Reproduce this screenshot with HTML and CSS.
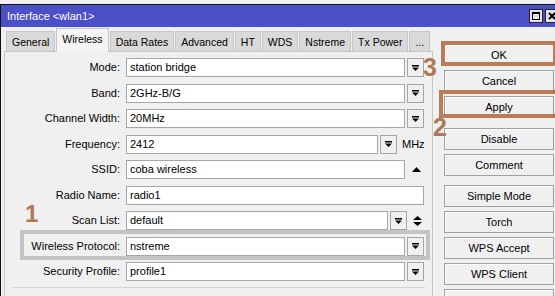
FILE: index.html
```html
<!DOCTYPE html>
<html lang="en">
<head>
  <meta charset="UTF-8">
  <title>Interface wlan1</title>
  <link rel="stylesheet" href="styles.css">
</head>
<body>
  <div class="window">
    <div class="frame">
      <div class="titlebar">
        <span>Interface &lt;wlan1&gt;</span>
        <div class="winbtns">
          <div class="winbtn"><svg width="8" height="8" viewBox="0 0 8 8"><path d="M0 0h8v8H0z M1 2v5h6V2z" fill="#000" fill-rule="evenodd"/></svg></div>
          <div class="winbtn"><svg width="8" height="8" viewBox="0 0 8 8"><path d="M1 1L7 7M7 1L1 7" stroke="#000" stroke-width="2"/></svg></div>
        </div>
      </div>

      <div class="content">
        <div class="main">
          <div class="tabs">
            <div class="tab">General</div>
            <div class="tab active">Wireless</div>
            <div class="tab">Data Rates</div>
            <div class="tab">Advanced</div>
            <div class="tab">HT</div>
            <div class="tab">WDS</div>
            <div class="tab">Nstreme</div>
            <div class="tab">Tx Power</div>
            <div class="tab">...</div>
          </div>

          <div class="panel">
            <div class="form">
              <label>Mode:</label>
              <div class="field"><div class="input">station bridge</div><div class="drop"><svg width="7" height="6" viewBox="0 0 7 6"><rect width="7" height="1.5"/><path d="M0 2.5h7L3.5 6z"/></svg></div></div>

              <label>Band:</label>
              <div class="field"><div class="input">2GHz-B/G</div><div class="drop"><svg width="7" height="6" viewBox="0 0 7 6"><rect width="7" height="1.5"/><path d="M0 2.5h7L3.5 6z"/></svg></div></div>

              <label>Channel Width:</label>
              <div class="field"><div class="input">20MHz</div><div class="drop"><svg width="7" height="6" viewBox="0 0 7 6"><rect width="7" height="1.5"/><path d="M0 2.5h7L3.5 6z"/></svg></div></div>

              <label>Frequency:</label>
              <div class="field"><div class="input">2412</div><div class="drop"><svg width="7" height="6" viewBox="0 0 7 6"><rect width="7" height="1.5"/><path d="M0 2.5h7L3.5 6z"/></svg></div><span class="unit">MHz</span></div>

              <label>SSID:</label>
              <div class="field"><div class="input">coba wireless</div><span class="extra"><svg width="9" height="5" viewBox="0 0 9 5"><path d="M0 5h9L4.5 0z"/></svg></span></div>

              <label>Radio Name:</label>
              <div class="field"><div class="input">radio1</div></div>

              <label>Scan List:</label>
              <div class="field"><div class="input">default</div><div class="drop"><svg width="7" height="6" viewBox="0 0 7 6"><rect width="7" height="1.5"/><path d="M0 2.5h7L3.5 6z"/></svg></div><span class="extra narrow"><svg width="9" height="10" viewBox="0 0 9 10"><path d="M0 4h9L4.5 0z M0 6h9L4.5 10z"/></svg></span></div>

              <label>Wireless Protocol:</label>
              <div class="field"><div class="input">nstreme</div><div class="drop"><svg width="7" height="6" viewBox="0 0 7 6"><rect width="7" height="1.5"/><path d="M0 2.5h7L3.5 6z"/></svg></div></div>

              <label>Security Profile:</label>
              <div class="field"><div class="input">profile1</div><div class="drop"><svg width="7" height="6" viewBox="0 0 7 6"><rect width="7" height="1.5"/><path d="M0 2.5h7L3.5 6z"/></svg></div></div>
            </div>
            <div class="sep"></div>
          </div>
        </div>

        <div class="actions">
          <button class="btn">OK</button>
          <button class="btn">Cancel</button>
          <button class="btn btn-apply">Apply</button>
          <button class="btn">Disable</button>
          <button class="btn btn-comment">Comment</button>
          <button class="btn">Simple Mode</button>
          <button class="btn">Torch</button>
          <button class="btn">WPS Accept</button>
          <button class="btn">WPS Client</button>
          <button class="btn"></button>
        </div>
      </div>
    </div>

    <!-- annotations drawn over the screenshot -->
    <div class="hl"></div>
    <div class="box box-ok"></div>
    <div class="box box-apply"></div>
    <span class="mark mark-1">1</span>
    <span class="mark mark-2">2</span>
    <span class="mark mark-3">3</span>
  </div>
</body>
</html>
```

FILE: styles.css
```css
body {
  margin: 0;
  background: #f0f0f0;
  font-family: "Liberation Sans", Arial, sans-serif;
  font-size: 11px;
  color: #000;
}

.window {
  position: relative;
  width: 555px;
  height: 296px;
  overflow: hidden;
  padding-top: 4px;
  box-sizing: border-box;
  background: #f0f0f0;
}

.frame {
  border-left: 1px solid #111;
  height: 292px;
}

.titlebar {
  height: 22px;
  border-top: 1px solid #111;
  background: #4b50c8;
  color: #fff;
  display: flex;
  align-items: center;
  justify-content: space-between;
  padding-left: 6px;
}

.winbtns {
  display: flex;
  gap: 2px;
  margin-right: -4px;
}

.winbtn {
  width: 14px;
  height: 14px;
  box-sizing: border-box;
  border: 1px solid #222;
  background: #e4e4e4;
  display: flex;
  align-items: center;
  justify-content: center;
}

.content {
  display: flex;
}

.main {
  width: 432px;
  flex-shrink: 0;
}

.tabs {
  display: flex;
  align-items: flex-end;
  gap: 1px;
  height: 24px;
  margin-left: 5px;
  position: relative;
  z-index: 1;
  white-space: nowrap;
}

.tab {
  flex-shrink: 0;
  height: 20px;
  line-height: 20px;
  padding: 0 5px;
  box-sizing: border-box;
  background: #d9d9d9;
  border: 1px solid #c6c6c6;
  border-bottom: none;
  font-size: 10.5px;
}

.tab.active {
  height: 24px;
  line-height: 20px;
  padding-bottom: 3px;
  background: #f4f4f4;
  margin-bottom: -1px;
}

.panel {
  margin-left: 3px;
  width: 429px;
  height: 250px;
  box-sizing: border-box;
  border: 1px solid #c6c6c6;
  background: #f0f0f0;
  padding-top: 6px;
}

.form {
  display: grid;
  grid-template-columns: 115px 298px;
  column-gap: 6px;
  row-gap: 6.5px;
}

.form label {
  text-align: right;
  line-height: 19px;
  height: 19px;
}

.field {
  display: flex;
  align-items: center;
  gap: 2px;
  height: 19px;
}

.input {
  flex: 1;
  height: 19px;
  box-sizing: border-box;
  border: 1px solid #a6a6a6;
  background: #fff;
  padding-left: 3px;
  line-height: 17px;
}

.drop {
  width: 17px;
  height: 19px;
  box-sizing: border-box;
  border: 1px solid #a6a6a6;
  background: #f0f0f0;
  display: flex;
  align-items: center;
  justify-content: center;
}

.extra {
  width: 17px;
  display: flex;
  justify-content: center;
  padding-left: 2px;
  box-sizing: border-box;
}

.extra.narrow {
  width: 15px;
}

.unit {
  width: 25px;
  padding-left: 3px;
  box-sizing: border-box;
}

.sep {
  margin: 6px 0 0 8px;
  width: 412px;
  height: 1px;
  background: #d2d2d2;
}

.actions {
  margin-left: 11px;
  width: 110px;
  flex-shrink: 0;
  padding-top: 17px;
  display: flex;
  flex-direction: column;
}

.btn {
  height: 22px;
  margin: 0 0 4px;
  padding: 0;
  box-sizing: border-box;
  border: 1px solid #a0a0a0;
  background: #f0f0f0;
  box-shadow: inset 1px 1px 0 #fbfbfb;
  font-family: inherit;
  font-size: 11px;
  color: #000;
  text-align: center;
}

.btn-apply {
  margin-bottom: 10px;
}

.btn-comment {
  margin-bottom: 9px;
}

.hl {
  position: absolute;
  left: 20px;
  top: 230px;
  width: 410px;
  height: 30px;
  box-sizing: border-box;
  border: 4px solid #c3c3c3;
}

.box {
  position: absolute;
  box-sizing: border-box;
  border: 4px solid #b97c58;
}

.box-ok {
  left: 441px;
  top: 41px;
  width: 116px;
  height: 25px;
}

.box-apply {
  left: 439px;
  top: 90px;
  width: 120px;
  height: 28px;
}

.mark {
  position: absolute;
  font-family: "Liberation Sans", Arial, sans-serif;
  font-weight: bold;
  color: #ae7a55;
  line-height: 1;
}

.mark-1 {
  left: 25px;
  top: 202px;
  font-size: 24px;
}

.mark-2 {
  left: 433px;
  top: 115px;
  font-size: 25px;
}

.mark-3 {
  left: 423px;
  top: 55px;
  font-size: 25px;
}
```
